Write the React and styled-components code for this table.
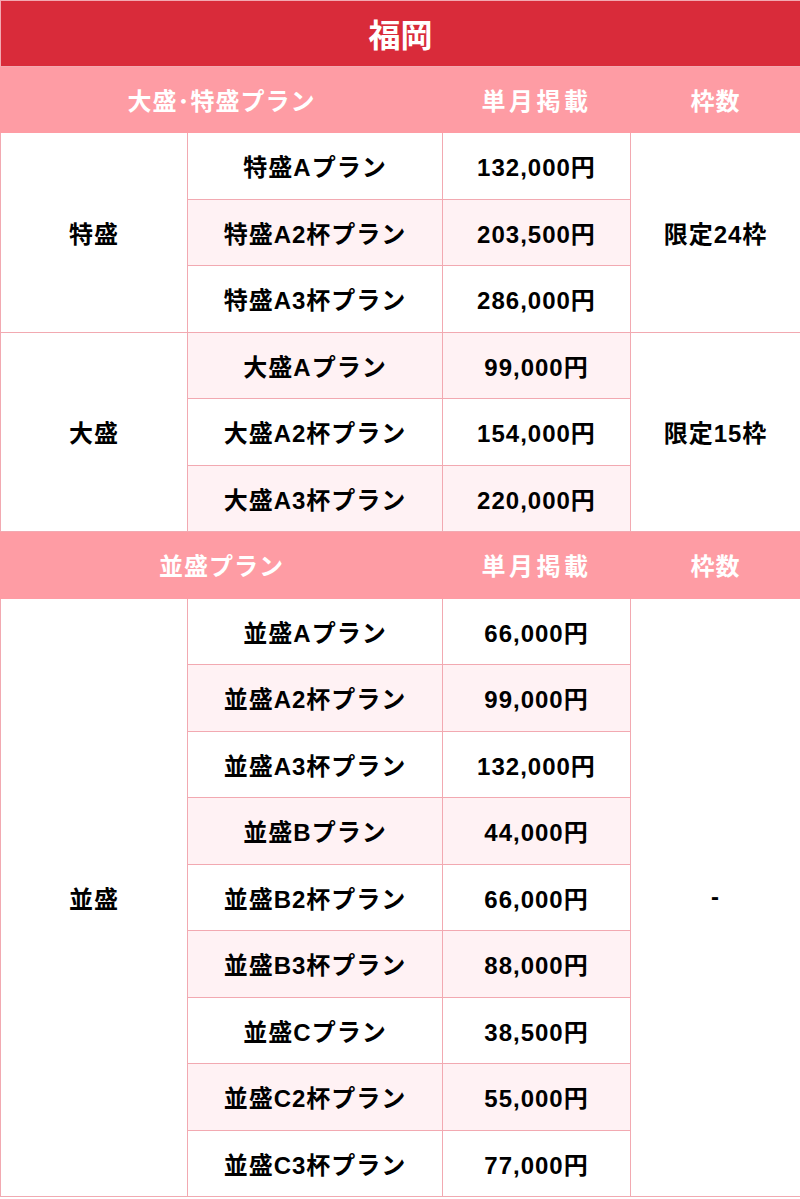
import React from "react";
import styled, { createGlobalStyle } from "styled-components";

const GlobalStyle = createGlobalStyle`
  html, body { margin: 0; padding: 0; background: #ffffff; }
  body { font-family: "Liberation Sans", "Noto Sans CJK JP", sans-serif; }
`;

const Table = styled.table`
  width: 800px;
  border-collapse: collapse;
  table-layout: fixed;
  font-family: "Liberation Sans", "Noto Sans CJK JP", sans-serif;
  font-weight: 700;
`;

const Row = styled.tr`
  height: ${(p) => (p.$title ? "65.5px" : "66.5px")};
`;

const TitleCell = styled.th`
  background: #d92b3a;
  color: #ffffff;
  font-size: 32px;
  font-weight: 700;
  text-align: center;
  vertical-align: middle;
  border: 1px solid #f2a9b1;
  padding: 0;
`;

const HeadCell = styled.th`
  background: #fe9ca4;
  color: #ffffff;
  font-size: 24px;
  font-weight: 700;
  text-align: center;
  vertical-align: middle;
  padding: 0;
  border: 1px solid #fe9ca4;
  letter-spacing: ${(p) => (p.$spaced ? "3.5px" : "1px")};
`;

const Cell = styled.td`
  background: ${(p) => (p.$tint ? "#fff2f4" : "#ffffff")};
  color: #000000;
  font-size: 24px;
  text-align: center;
  vertical-align: middle;
  padding: 0;
  border: 1px solid #f2a9b1;
  letter-spacing: 1px;
`;

const groups = [
  {
    header: "大盛･特盛プラン",
    rows: [
      {
        label: "特盛",
        limit: "限定24枠",
        items: [
          ["特盛Aプラン", "132,000円"],
          ["特盛A2杯プラン", "203,500円"],
          ["特盛A3杯プラン", "286,000円"],
        ],
      },
      {
        label: "大盛",
        limit: "限定15枠",
        items: [
          ["大盛Aプラン", "99,000円"],
          ["大盛A2杯プラン", "154,000円"],
          ["大盛A3杯プラン", "220,000円"],
        ],
      },
    ],
  },
  {
    header: "並盛プラン",
    rows: [
      {
        label: "並盛",
        limit: "-",
        items: [
          ["並盛Aプラン", "66,000円"],
          ["並盛A2杯プラン", "99,000円"],
          ["並盛A3杯プラン", "132,000円"],
          ["並盛Bプラン", "44,000円"],
          ["並盛B2杯プラン", "66,000円"],
          ["並盛B3杯プラン", "88,000円"],
          ["並盛Cプラン", "38,500円"],
          ["並盛C2杯プラン", "55,000円"],
          ["並盛C3杯プラン", "77,000円"],
        ],
      },
    ],
  },
];

export default function App() {
  let counter = 0;
  return (
    <>
      <GlobalStyle />
      <Table>
        <colgroup>
          <col style={{ width: "187px" }} />
          <col style={{ width: "255px" }} />
          <col style={{ width: "188px" }} />
          <col style={{ width: "170px" }} />
        </colgroup>
        <tbody>
          <Row $title>
            <TitleCell colSpan={4}>福岡</TitleCell>
          </Row>
          {groups.map((g) => {
            counter = 0;
            return (
              <React.Fragment key={g.header}>
                <Row>
                  <HeadCell colSpan={2}>{g.header}</HeadCell>
                  <HeadCell $spaced>単月掲載</HeadCell>
                  <HeadCell>枠数</HeadCell>
                </Row>
                {g.rows.map((r) =>
                  r.items.map((it, i) => {
                    const tint = counter % 2 === 1;
                    counter += 1;
                    return (
                      <Row key={it[0]}>
                        {i === 0 && <Cell rowSpan={r.items.length}>{r.label}</Cell>}
                        <Cell $tint={tint}>{it[0]}</Cell>
                        <Cell $tint={tint}>{it[1]}</Cell>
                        {i === 0 && <Cell rowSpan={r.items.length}>{r.limit}</Cell>}
                      </Row>
                    );
                  })
                )}
              </React.Fragment>
            );
          })}
        </tbody>
      </Table>
    </>
  );
}
